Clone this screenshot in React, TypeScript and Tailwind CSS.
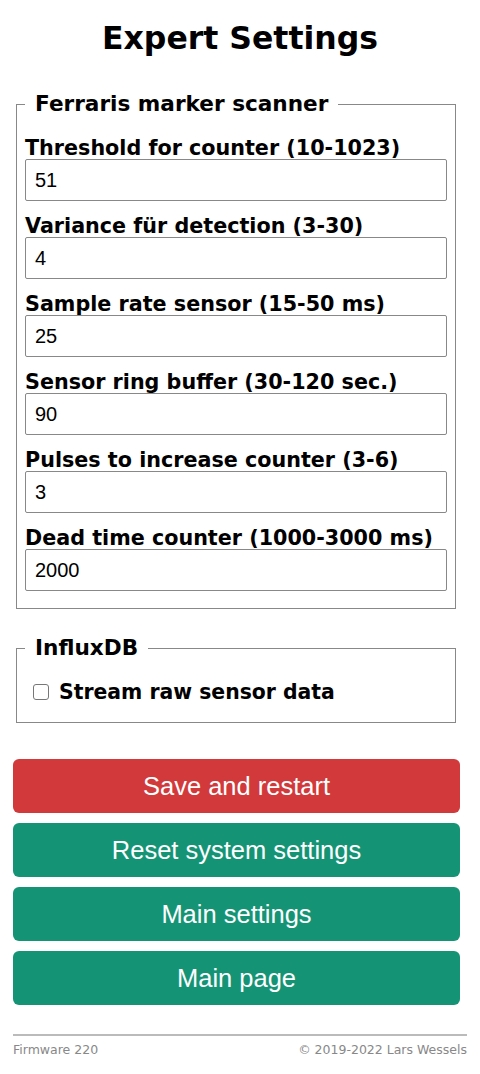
import React from "react";

const fields: [string, string][] = [
  ["Threshold for counter (10-1023)", "51"],
  ["Variance für detection (3-30)", "4"],
  ["Sample rate sensor (15-50 ms)", "25"],
  ["Sensor ring buffer (30-120 sec.)", "90"],
  ["Pulses to increase counter (3-6)", "3"],
  ["Dead time counter (1000-3000 ms)", "2000"],
];

const verdana = "font-['DejaVu_Sans',Verdana,sans-serif]";

export default function App() {
  return (
    <div className={`min-h-[1074px] bg-white px-[13px] text-black ${verdana}`}>
      <h1 className="pt-[19px] text-center text-[31.5px] font-bold leading-[38px]">Expert Settings</h1>

      <fieldset className="ml-[3px] mr-[11px] mt-[35px] border border-[#888] px-[8px] pb-[7px] pt-[17px]">
        <legend className="px-[10px] text-[21.6px] font-bold leading-[24px]">Ferraris marker scanner</legend>
        {fields.map(([label, value]) => (
          <div key={label} className="mb-[10px]">
            <div className="pt-[4px] text-[20.7px] font-bold leading-[22px] whitespace-nowrap">{label}</div>
            <input
              readOnly
              value={value}
              className="box-border h-[42px] w-full rounded-[2px] border border-[#888] px-[9px] font-['Liberation_Sans',Arial,sans-serif] text-[20px] outline-none"
            />
          </div>
        ))}
      </fieldset>

      <fieldset className="ml-[3px] mr-[11px] mt-[27px] border border-[#888] px-[8px] pb-[18px] pt-[20px]">
        <legend className="px-[10px] text-[21.6px] font-bold leading-[24px]">InfluxDB</legend>
        <label className="flex items-center gap-[10px] pl-[8px] text-[20.4px] font-bold leading-[24px]">
          <span className="box-border inline-block h-[16px] w-[16px] rounded-[3px] border border-[#777] bg-white" />
          Stream raw sensor data
        </label>
      </fieldset>

      <div className="mt-[36px] mr-[7px] flex flex-col gap-[10px] font-['Liberation_Sans',Arial,sans-serif]">
        {[
          ["Save and restart", "bg-[#d2393b]"],
          ["Reset system settings", "bg-[#159475]"],
          ["Main settings", "bg-[#159475]"],
          ["Main page", "bg-[#159475]"],
        ].map(([t, c]) => (
          <button key={t} className={`h-[54px] w-full rounded-[6px] ${c} text-[25.5px] text-white`}>{t}</button>
        ))}
      </div>

      <div className="mt-[29px] border-t-2 border-[#bbb] pt-[6px] flex justify-between text-[12.5px] leading-[16px] text-[#888]">
        <span>Firmware 220</span>
        <span>© 2019-2022 Lars Wessels</span>
      </div>
    </div>
  );
}
